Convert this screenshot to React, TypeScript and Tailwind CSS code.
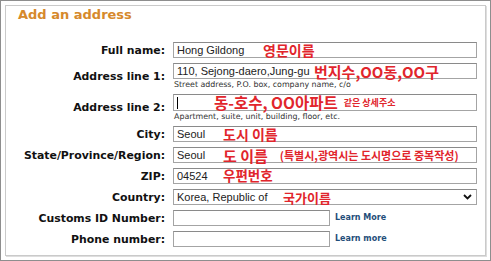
import type { ReactNode } from 'react';

const RED = 'font-bold text-[#e1252c] leading-none whitespace-nowrap font-["Noto_Sans_CJK_KR",sans-serif]';

function Field({ children, className = '' }: { children?: ReactNode; className?: string }) {
  return (
    <div
      className={`h-[16px] border border-[#a4a4a4] border-t-[#8a8a8a] bg-white flex items-center pl-[3px] text-[11px] text-[#222] font-['Liberation_Sans',sans-serif] whitespace-nowrap ${className}`}
    >
      {children}
    </div>
  );
}

function Row({ label, children }: { label: string; children: ReactNode }) {
  return (
    <div className="flex items-center gap-[8px]">
      <div className="w-[159px] shrink-0 text-right text-[10.9px] font-bold text-[#111] leading-[13px]">{label}</div>
      <div className="flex-1 min-w-0">{children}</div>
    </div>
  );
}

function Helper({ children }: { children: ReactNode }) {
  return <div className="h-[10px] pl-[1px] pt-[1px] text-[7.9px] leading-[9px] text-[#333]">{children}</div>;
}

function LearnMore({ children }: { children: string }) {
  return <span className="ml-[5px] text-[8px] font-bold text-[#1f4e7a]">{children}</span>;
}

export default function App() {
  return (
    <div className="w-[491px] h-[261px] bg-white border border-[#8e8e8e] p-[4px] font-['DejaVu_Sans',sans-serif]">
      <div className="h-full border border-[#cacaca] shadow-[1px_1px_0_#dedede]">
        <h1 className="pl-[12px] text-[13px] leading-[18px] font-bold text-[#d6892c]">Add an address</h1>

        <div className="mt-[18px] pr-[8px] flex flex-col gap-[5px]">
          <Row label="Full name:">
            <Field>
              <span className="w-[86px]">Hong Gildong</span>
              <span className={`${RED} text-[14px]`}>영문이름</span>
            </Field>
          </Row>

          <Row label="Address line 1:">
            <Field>
              <span className="w-[137px]">110, Sejong-daero,Jung-gu</span>
              <span className={`${RED} text-[15px]`}>번지수,OO동,OO구</span>
            </Field>
            <Helper>Street address, P.O. box, company name, c/o</Helper>
          </Row>

          <Row label="Address line 2:">
            <Field className="h-[17px]">
              <span className="w-[1px] h-[12px] bg-black" />
              <span className={`${RED} ml-[36px] text-[15.5px]`}>동-호수, OO아파트</span>
              <span className={`${RED} ml-[6px] text-[9px]`}>같은 상세주소</span>
            </Field>
            <Helper>Apartment, suite, unit, building, floor, etc.</Helper>
          </Row>

          <Row label="City:">
            <Field>
              <span className="w-[46px]">Seoul</span>
              <span className={`${RED} text-[14px]`}>도시 이름</span>
            </Field>
          </Row>

          <Row label="State/Province/Region:">
            <Field>
              <span className="w-[46px]">Seoul</span>
              <span className={`${RED} text-[15px]`}>도 이름</span>
              <span className={`${RED} ml-[12px] text-[11px]`}>(특별시,광역시는 도시명으로 중복작성)</span>
            </Field>
          </Row>

          <Row label="ZIP:">
            <Field>
              <span className="w-[46px]">04524</span>
              <span className={`${RED} text-[13.5px]`}>우편번호</span>
            </Field>
          </Row>

          <Row label="Country:">
            <Field className="pr-[4px]">
              <span className="w-[106px]">Korea, Republic of</span>
              <span className={`${RED} text-[13px]`}>국가이름</span>
              <svg className="ml-auto w-[9px] h-[6px]" viewBox="0 0 9 6" fill="none">
                <path d="M1 1l3.5 3.5L8 1" stroke="#111" strokeWidth={1.8} />
              </svg>
            </Field>
          </Row>

          <Row label="Customs ID Number:">
            <div className="flex items-center">
              <Field className="w-[157px]" />
              <LearnMore>Learn More</LearnMore>
            </div>
          </Row>

          <Row label="Phone number:">
            <div className="flex items-center">
              <Field className="w-[157px]" />
              <LearnMore>Learn more</LearnMore>
            </div>
          </Row>
        </div>
      </div>
    </div>
  );
}
